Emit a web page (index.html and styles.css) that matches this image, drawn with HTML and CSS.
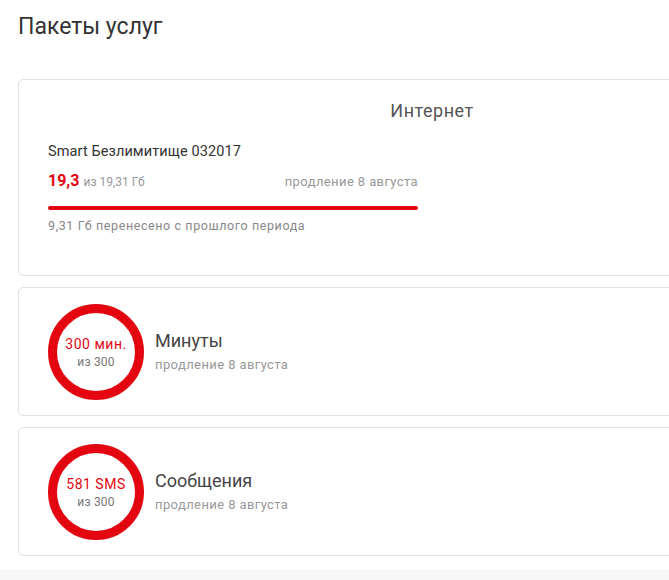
FILE: index.html
```html
<!DOCTYPE html>
<html lang="ru">

<head>
  <meta charset="UTF-8">
  <meta name="viewport" content="width=device-width, initial-scale=1.0">
  <title>Пакеты услуг</title>
  <link rel="stylesheet" href="styles.css">
</head>

<body>
  <div class="page">
    <h1>Пакеты услуг</h1>

    <div class="card internet">
      <div class="card-title">Интернет</div>
      <div class="tariff">Smart Безлимитище 032017</div>
      <div class="usage">
        <div><span class="amount">19,3</span> <span class="total">из 19,31 Гб</span></div>
        <div class="renew">продление 8 августа</div>
      </div>
      <div class="bar"><div class="bar-fill" style="width: 100%"></div></div>
      <div class="note">9,31 Гб перенесено с прошлого периода</div>
    </div>

    <div class="card package">
      <div class="ring">
        <div class="ring-value">300 мин.</div>
        <div class="ring-total">из 300</div>
      </div>
      <div class="package-info">
        <div class="package-name">Минуты</div>
        <div class="renew">продление 8 августа</div>
      </div>
    </div>

    <div class="card package">
      <div class="ring">
        <div class="ring-value">581 SMS</div>
        <div class="ring-total">из 300</div>
      </div>
      <div class="package-info">
        <div class="package-name">Сообщения</div>
        <div class="renew">продление 8 августа</div>
      </div>
    </div>
  </div>
  <div class="footer"></div>
</body>

</html>
```

FILE: styles.css
```css
body {
  margin: 0;
  width: 669px;
  height: 580px;
  overflow: hidden;
  background-color: #fff;
  font-family: Roboto, "Noto Sans", sans-serif;
  color: #333;
}

.page {
  padding-left: 18px;
  height: 570px;
}

h1 {
  margin: 0;
  padding-top: 14px;
  font-size: 23px;
  line-height: 26px;
  font-weight: 400;
  color: #333;
}

.card {
  box-sizing: border-box;
  width: 828px;
  border: 1px solid #e2e2e2;
  border-radius: 5px;
  background-color: #fff;
}

.internet {
  margin-top: 39px;
  height: 197px;
  padding: 0 29px;
}

.card-title {
  margin-top: 20px;
  text-align: center;
  font-size: 18px;
  line-height: 22px;
  letter-spacing: 0.5px;
  color: #555;
}

.tariff {
  margin-top: 20px;
  font-size: 14.5px;
  line-height: 20px;
  letter-spacing: 0.1px;
  color: #333;
}

.usage {
  width: 370px;
  margin-top: 9px;
  display: flex;
  justify-content: space-between;
  align-items: baseline;
  line-height: 20px;
}

.amount {
  font-size: 16px;
  font-weight: 700;
  color: #e30611;
}

.total {
  font-size: 12px;
  color: #999;
}

.renew {
  font-size: 13px;
  letter-spacing: 0.4px;
  color: #999;
}

.bar {
  width: 370px;
  height: 4px;
  margin-top: 14px;
  border-radius: 2px;
  background-color: #eee;
}

.bar-fill {
  height: 100%;
  border-radius: 2px;
  background-color: #e30611;
}

.note {
  margin-top: 8px;
  font-size: 12.5px;
  line-height: 16px;
  letter-spacing: 0.6px;
  color: #888;
}

.package {
  margin-top: 11px;
  height: 129px;
  padding-left: 29px;
  display: flex;
  align-items: center;
  gap: 11px;
}

.ring {
  box-sizing: border-box;
  width: 96px;
  height: 96px;
  border: 9px solid #e30611;
  border-radius: 50%;
  display: flex;
  flex-direction: column;
  align-items: center;
  justify-content: center;
}

.ring-value {
  font-size: 14px;
  line-height: 18px;
  letter-spacing: 0.5px;
  color: #e30611;
}

.ring-total {
  margin-top: 2px;
  font-size: 12px;
  line-height: 14px;
  letter-spacing: 0.2px;
  color: #777;
}

.package-info {
  margin-top: -2px;
}

.package-name {
  font-size: 18px;
  line-height: 24px;
  color: #444;
}

.package-info .renew {
  margin-top: 4px;
}

.footer {
  height: 10px;
  background-color: #f7f7f7;
}
```
